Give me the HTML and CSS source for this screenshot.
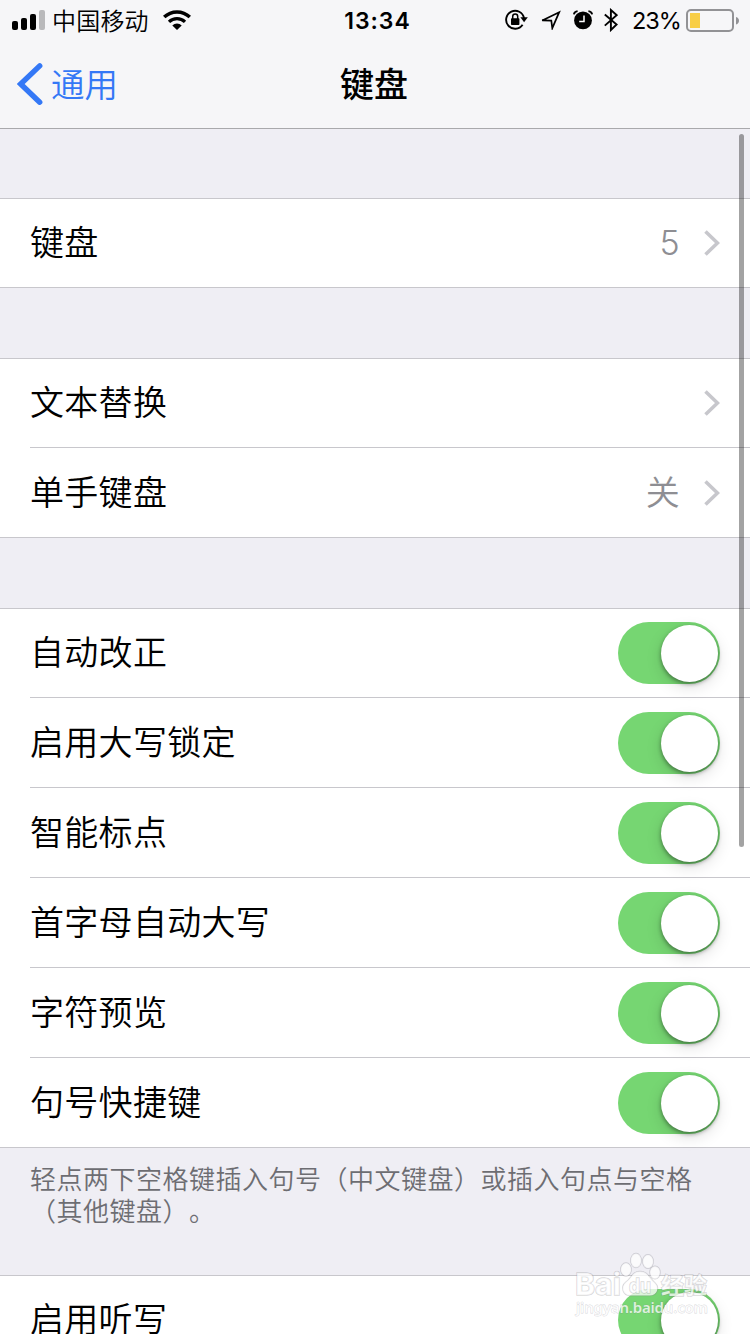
FILE: index.html
```html
<!DOCTYPE html>
<html lang="zh-CN">
<head>
<meta charset="utf-8">
<title>键盘</title>
<link rel="stylesheet" href="styles.css">
</head>
<body>
<div class="screen">
  <header class="header">
    <div class="status">
      <div class="status-left">
        <svg class="signal" width="33" height="20" viewBox="0 0 33 20">
          <rect x="0" y="11" width="6" height="9" rx="2"/>
          <rect x="9" y="8" width="6" height="12" rx="2"/>
          <rect x="18" y="4" width="6" height="16" rx="2"/>
          <rect class="dim" x="27" y="0" width="6" height="20" rx="2"/>
        </svg>
        <span class="carrier">中国移动</span>
        <svg class="wifi" width="28" height="20" viewBox="0 0 28 20">
          <path d="M1.2 7.1A18.4 18.4 0 0 1 26.8 7.1" fill="none" stroke="#000" stroke-width="3.5"/>
          <path d="M6 11.9A11.6 11.6 0 0 1 22 11.9" fill="none" stroke="#000" stroke-width="3.3"/>
          <path d="M9.3 15.4A6.8 6.8 0 0 1 18.7 15.4L14 20Z"/>
        </svg>
      </div>
      <div class="clock">13:34</div>
      <div class="status-right">
        <svg class="lock" width="23" height="22" viewBox="0 0 23 22">
          <path d="M17.6 15.8A9 9 0 1 1 19 9.2" fill="none" stroke="#000" stroke-width="1.9"/>
          <path d="M15.4 8.3H22.8L19.1 13.2Z"/>
          <rect x="6" y="9.3" width="8.4" height="6.7" rx=".8"/>
          <path d="M7.7 10V7.400a2.500 2.500 0 0 1 5 0V10" fill="none" stroke="#000" stroke-width="1.5"/>
        </svg>
        <svg class="location" width="20" height="20" viewBox="0 0 20 20">
          <path d="M1.2 10.4L18.2 2.2L11.3 18.2L10.3 10.7Z" fill="none" stroke="#000" stroke-width="1.7"/>
        </svg>
        <svg class="alarm" width="20" height="20" viewBox="0 0 20 20">
          <circle cx="10" cy="10.4" r="8.9"/>
          <path d="M.9 4.4Q1.4 1.5 4.6 1.1M19.1 4.4Q18.6 1.5 15.4 1.1" fill="none" stroke="#000" stroke-width="1.9"/>
          <path d="M11 5.4V11.4H6.2" fill="none" stroke="#fff" stroke-width="1.5"/>
        </svg>
        <svg class="bluetooth" width="14" height="24" viewBox="0 0 14 24">
          <path d="M.8 6.5L12.6 16.5L6.9 22V2L12.6 7.1L.8 17.6" fill="none" stroke="#000" stroke-width="1.9"/>
        </svg>
        <span class="percent">23%</span>
        <svg class="battery" width="54" height="24" viewBox="0 0 54 24">
          <rect x="1" y="1" width="46" height="21" rx="4" fill="none" stroke="#929295" stroke-width="2"/>
          <rect x="4" y="4" width="10" height="15" fill="#f8ce46"/>
          <path d="M50 8Q53 9 53 11.7T50 15.6Z" fill="#929295"/>
        </svg>
      </div>
    </div>
    <nav class="nav">
      <div class="back">
        <svg width="26" height="42" viewBox="0 0 26 42"><path d="M22.700 2.900L3.700 21L22.700 39.200" fill="none" stroke="#3478f6" stroke-width="5.400" stroke-linecap="round"/></svg>
        <span>通用</span>
      </div>
      <h1 class="title">键盘</h1>
    </nav>
  </header>

  <main class="list">
    <section class="group">
      <div class="row"><span>键盘</span><span class="value">5</span><svg class="chevron" width="16" height="26" viewBox="0 0 16 26"><path d="M1.5 1.5L13.5 13L1.5 24.5"/></svg></div>
    </section>
    <section class="group">
      <div class="row"><span>文本替换</span><span class="value"></span><svg class="chevron" width="16" height="26" viewBox="0 0 16 26"><path d="M1.5 1.5L13.5 13L1.5 24.5"/></svg></div>
      <div class="row"><span>单手键盘</span><span class="value">关</span><svg class="chevron" width="16" height="26" viewBox="0 0 16 26"><path d="M1.5 1.5L13.5 13L1.5 24.5"/></svg></div>
    </section>
    <section class="group">
      <div class="row"><span>自动改正</span><i class="switch"></i></div>
      <div class="row"><span>启用大写锁定</span><i class="switch"></i></div>
      <div class="row"><span>智能标点</span><i class="switch"></i></div>
      <div class="row"><span>首字母自动大写</span><i class="switch"></i></div>
      <div class="row"><span>字符预览</span><i class="switch"></i></div>
      <div class="row"><span>句号快捷键</span><i class="switch"></i></div>
    </section>
    <p class="note">轻点两下空格键插入句号（中文键盘）或插入句点与空格<br>（其他键盘）。</p>
    <section class="group last">
      <div class="row"><span>启用听写</span><i class="switch"></i></div>
    </section>
  </main>

  <div class="scrollbar"></div>
  <svg class="watermark" width="150" height="74" viewBox="0 0 150 74">
    <g class="mark">
      <ellipse cx="61" cy="19.500" rx="5.200" ry="6.500"/>
      <ellipse cx="71" cy="10.500" rx="5.200" ry="7"/>
      <ellipse cx="83" cy="11.500" rx="5.200" ry="6.700"/>
      <ellipse cx="90" cy="22.500" rx="5" ry="6.300"/>
      <path d="M75 21.500C67 21.500 67 28 61 32C55 37 58 46 66 45.500H84C92 46 95 38 90 33C84 28 83 21.500 75 21.500Z"/>
      <text class="wm-brand" x="10" y="45" textLength="46" lengthAdjust="spacingAndGlyphs">Bai</text>
      <text class="wm-du" x="64" y="43" textLength="22" lengthAdjust="spacingAndGlyphs">du</text>
      <text class="wm-cjk" x="96" y="43.500" textLength="46">经验</text>
      <text class="wm-url" x="11" y="63" textLength="132">jingyan.baidu.com</text>
    </g>
  </svg>
</div>
</body>
</html>
```
FILE: styles.css
```css
* { box-sizing: border-box; }
body { margin: 0; }
.screen {
  position: relative;
  width: 750px;
  height: 1334px;
  overflow: hidden;
  background: #efeef4;
  color: #000;
  font-family: Inter, "Noto Sans CJK SC", sans-serif;
}
.header {
  height: 129px;
  background: #f6f6f8;
  border-bottom: 1px solid #a9a9ac;
}
.status {
  display: grid;
  grid-template-columns: 1fr auto 1fr;
  height: 40px;
}
.status-left { display: flex; align-items: flex-start; padding-left: 12px; }
.signal { margin-top: 10px; }
.signal .dim { fill: #b9b9bb; }
.carrier { margin-left: 7px; font: 24px/39px "Noto Sans CJK SC", sans-serif; font-weight: 350; letter-spacing: .2px; }
.wifi { margin: 10px 0 0 14px; }
.clock { padding-left: 5px; font-size: 23px; font-weight: 600; line-height: 42px; letter-spacing: 1px; }
.status-right { display: flex; align-items: flex-start; justify-content: flex-end; padding-right: 10px; }
.lock { margin: 9px 13px 0 0; }
.location { margin: 10px 12px 0 0; }
.alarm { margin: 10px 11px 0 0; }
.bluetooth { margin: 8px 14px 0 0; }
.percent { width: 48px; margin-right: 6px; font-size: 23.5px; line-height: 42px; letter-spacing: -1px; white-space: nowrap; }
.battery { margin-top: 9px; }
.nav {
  display: grid;
  grid-template-columns: 1fr auto 1fr;
  height: 88px;
  align-items: center;
}
.back { display: flex; align-items: center; gap: 8px; padding-left: 17px; color: #3478f6; font-size: 33.5px; font-weight: 350; }
.back span, .title { padding-bottom: 4px; }
.title { margin: 0; padding-right: 2px; font-size: 34px; font-weight: 500; }
.group { margin-top: 70px; background: #fff; border-top: 1px solid #c8c7cc; border-bottom: 1px solid #c8c7cc; }
.group:first-child { margin-top: 69px; }
.row {
  display: flex;
  align-items: flex-start;
  height: 90px;
  margin-left: 30px;
  padding: 14px 30px 0 0;
  border-bottom: 1px solid #c8c7cc;
  font-size: 34px;
  font-weight: 350;
  line-height: 61px;
  letter-spacing: .3px;
}
.row:first-child { height: 89px; padding-top: 13px; }
.row:last-child { border-bottom: 0; height: 89px; }
.row:only-child { height: 88px; }
.value { margin-left: auto; padding-right: 24px; color: #8e8e93; }
.chevron { margin-top: 18px; fill: none; stroke: #c7c7cc; stroke-width: 3.6; }
.switch {
  display: flex;
  justify-content: flex-end;
  width: 102px;
  height: 62px;
  margin-left: auto;
  padding: 2.5px;
  border-radius: 31px;
  background: #76d672;
}
.switch::after {
  content: "";
  width: 57px;
  height: 57px;
  border-radius: 50%;
  background: #fff;
  box-shadow: 0 5px 16px rgba(0,0,0,.13), 0 2px 4px rgba(0,0,0,.4);
}
.note {
  height: 127px;
  margin: 0;
  padding: 16px 0 0 30px;
  color: #6d6d72;
  font-size: 26px;
  font-weight: 350;
  line-height: 32px;
  letter-spacing: .5px;
  white-space: nowrap;
  text-spacing-trim: space-all;
  font-kerning: none;
}
.group.last { margin-top: 0; }
.scrollbar {
  position: absolute;
  top: 134px;
  left: 739px;
  width: 5px;
  height: 713px;
  border-radius: 3px;
  background: rgba(0,0,0,.36);
}
.watermark { position: absolute; left: 565px; top: 1250px; }
.mark {
  fill: rgba(255,255,255,.75);
  stroke: rgba(120,120,130,.3);
  stroke-width: 1.4;
  paint-order: stroke;
}
.wm-brand { font: bold 30px Inter, sans-serif; }
.wm-du { font: bold 20px Inter, sans-serif; }
.wm-cjk { font: bold 23px "Noto Sans CJK SC", sans-serif; }
.wm-url { font: 600 15px "Noto Sans", sans-serif; stroke-width: .8; }
```
